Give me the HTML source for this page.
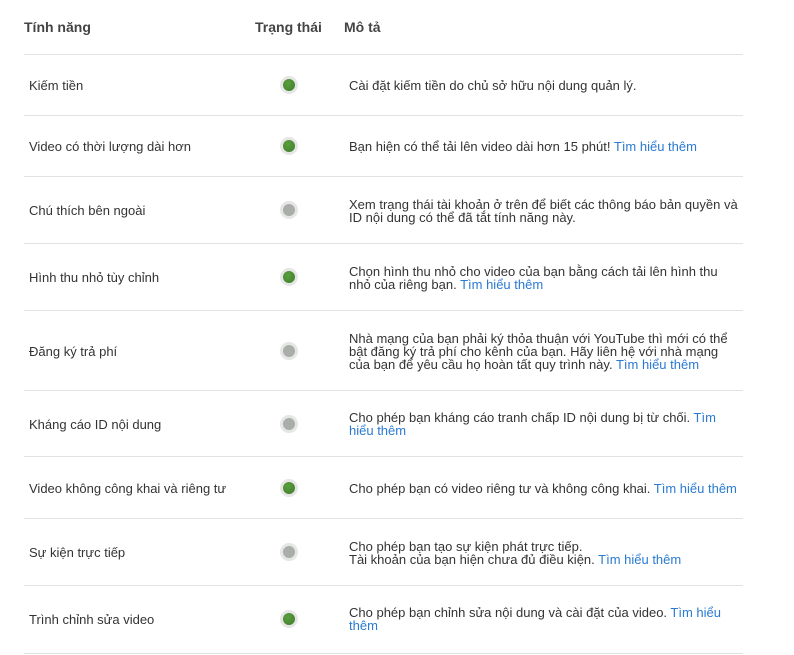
<!DOCTYPE html>
<html><head><meta charset="utf-8"><style>
body{margin:0;background:#fff;font-family:"Liberation Sans",Arial,sans-serif;color:#333;width:794px;height:655px;overflow:hidden;position:relative}
.h{position:absolute;top:19px;font-weight:bold;font-size:14px;color:#444}
.row{position:absolute;left:24px;width:719px;border-top:1px solid #e2e2e2}
.f{position:absolute;left:5px;font-size:13px;color:#333}
.d{position:absolute;left:325px;font-size:13px;line-height:13px;color:#333;white-space:nowrap}
.dot{position:absolute;left:256px;width:12px;height:12px;border-radius:50%;border:3px solid #e6e6e6}
.g{background:radial-gradient(circle at 40% 35%,#5a9e3e,#3f7d2a)}
.y{background:#a9aea9}
a{color:#2a7ad2;text-decoration:none}
</style></head><body>
<div class="h" style="left:24px">Tính năng</div>
<div class="h" style="left:255px">Trạng thái</div>
<div class="h" style="left:344px">Mô tả</div>

<div class="row" style="top:54px;height:61px"><div class="f" style="top:23px">Kiếm tiền</div><div class="dot g" style="top:21px"></div><div class="d" style="top:24px">Cài đặt kiếm tiền do chủ sở hữu nội dung quản lý.</div></div>
<div class="row" style="top:115px;height:61px"><div class="f" style="top:23px">Video có thời lượng dài hơn</div><div class="dot g" style="top:21px"></div><div class="d" style="top:24px">Bạn hiện có thể tải lên video dài hơn 15 phút! <a>Tìm hiểu thêm</a></div></div>
<div class="row" style="top:176px;height:67px"><div class="f" style="top:26px">Chú thích bên ngoài</div><div class="dot y" style="top:24px"></div><div class="d" style="top:21px">Xem trạng thái tài khoản ở trên để biết các thông báo bản quyền và<br>ID nội dung có thể đã tắt tính năng này.</div></div>
<div class="row" style="top:243px;height:67px"><div class="f" style="top:26px">Hình thu nhỏ tùy chỉnh</div><div class="dot g" style="top:24px"></div><div class="d" style="top:21px">Chọn hình thu nhỏ cho video của bạn bằng cách tải lên hình thu<br>nhỏ của riêng bạn. <a>Tìm hiểu thêm</a></div></div>
<div class="row" style="top:310px;height:80px"><div class="f" style="top:33px">Đăng ký trả phí</div><div class="dot y" style="top:31px"></div><div class="d" style="top:21px">Nhà mạng của bạn phải ký thỏa thuận với YouTube thì mới có thể<br>bật đăng ký trả phí cho kênh của bạn. Hãy liên hệ với nhà mạng<br>của bạn để yêu cầu họ hoàn tất quy trình này. <a>Tìm hiểu thêm</a></div></div>
<div class="row" style="top:390px;height:66px"><div class="f" style="top:26px">Kháng cáo ID nội dung</div><div class="dot y" style="top:24px"></div><div class="d" style="top:20px">Cho phép bạn kháng cáo tranh chấp ID nội dung bị từ chối. <a>Tìm<br>hiểu thêm</a></div></div>
<div class="row" style="top:456px;height:62px"><div class="f" style="top:24px">Video không công khai và riêng tư</div><div class="dot g" style="top:22px"></div><div class="d" style="top:25px">Cho phép bạn có video riêng tư và không công khai. <a>Tìm hiểu thêm</a></div></div>
<div class="row" style="top:518px;height:67px"><div class="f" style="top:26px">Sự kiện trực tiếp</div><div class="dot y" style="top:24px"></div><div class="d" style="top:21px">Cho phép bạn tạo sự kiện phát trực tiếp.<br>Tài khoản của bạn hiện chưa đủ điều kiện. <a>Tìm hiểu thêm</a></div></div>
<div class="row" style="top:585px;height:67px;border-bottom:1px solid #e2e2e2"><div class="f" style="top:26px">Trình chỉnh sửa video</div><div class="dot g" style="top:24px"></div><div class="d" style="top:20px">Cho phép bạn chỉnh sửa nội dung và cài đặt của video. <a>Tìm hiểu<br>thêm</a></div></div>
</body></html>
